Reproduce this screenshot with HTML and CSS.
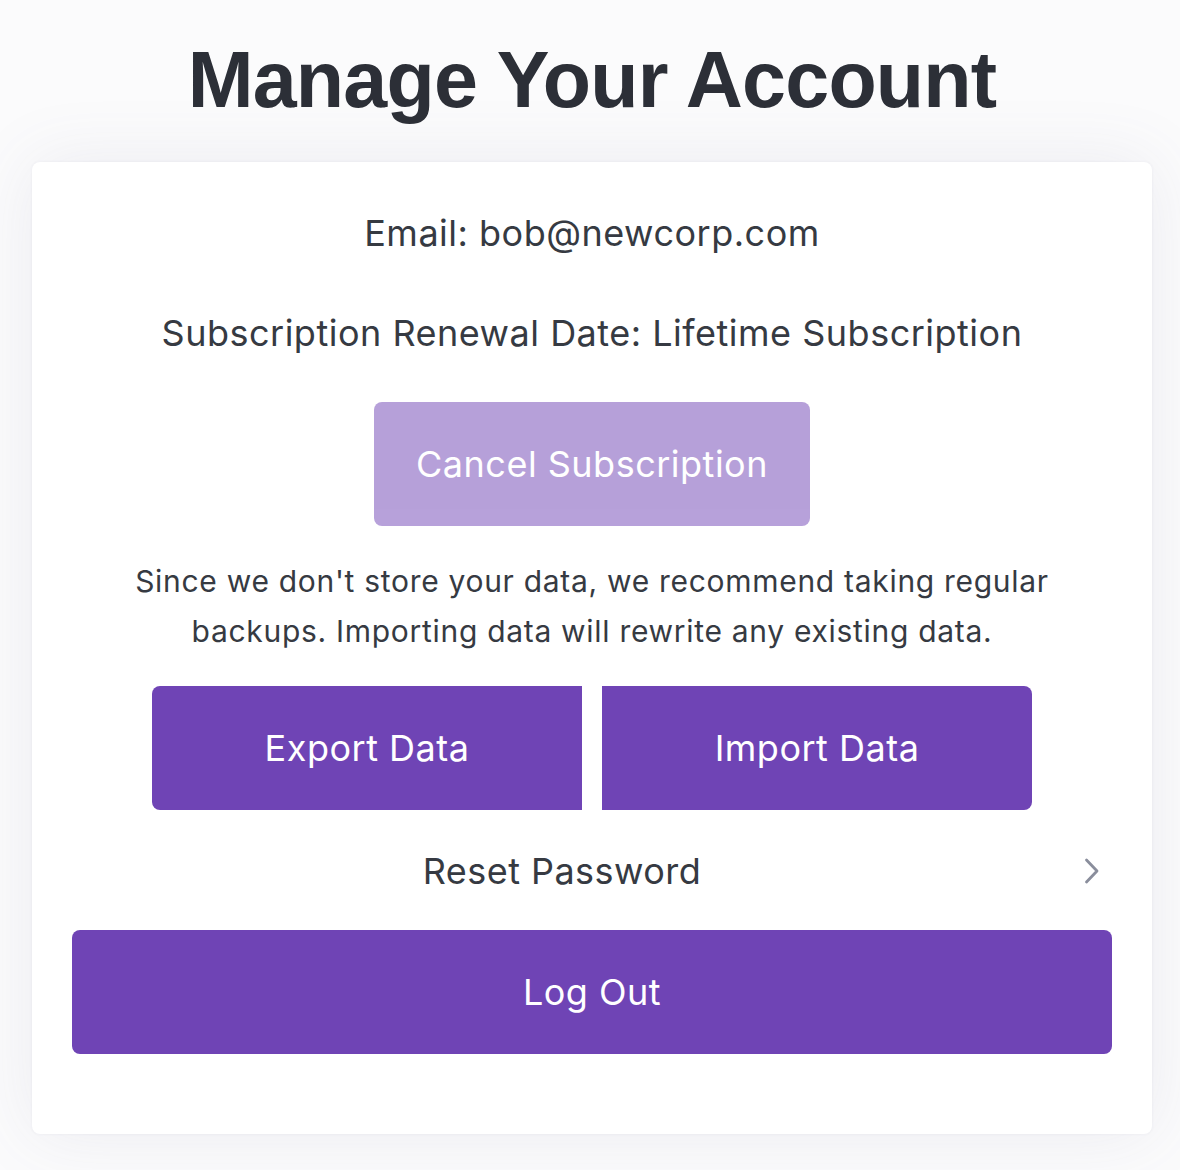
FILE: index.html
```html
<!DOCTYPE html>
<html lang="en">

<head>
    <meta charset="UTF-8">
    <meta name="viewport" content="width=device-width, initial-scale=1.0">
    <title>Manage Your Account</title>
    <link rel="stylesheet" href="styles.css">
</head>

<body>
    <div class="pagina">
        <h1 class="titulo">Manage Your Account</h1>

        <div class="tarjeta">
            <p class="dato">Email: bob@newcorp.com</p>
            <p class="dato renovacion">Subscription Renewal Date: Lifetime Subscription</p>

            <button class="boton boton-cancelar" disabled>Cancel Subscription</button>

            <p class="aviso">Since we don't store your data, we recommend taking regular backups. Importing data will rewrite any existing data.</p>

            <div class="grupo-datos">
                <button class="boton boton-exportar">Export Data</button>
                <button class="boton boton-importar">Import Data</button>
            </div>

            <div class="fila-reset">
                <span class="fila-texto">Reset Password</span>
                <span class="fila-flecha">
                    <svg width="16" height="28" viewBox="0 0 16 28" fill="none" stroke="#8a8e9c" stroke-width="2.8" stroke-linecap="round" stroke-linejoin="round">
                        <path d="M2.5 3 L13 14 L2.5 25" />
                    </svg>
                </span>
            </div>

            <button class="boton boton-salir">Log Out</button>
        </div>
    </div>
</body>

</html>
```

FILE: styles.css
```css
body {
    margin: 0;
    background-color: #fbfbfc;
    font-family: Inter, "Noto Sans", sans-serif;
    color: #363a42;
}

.pagina {
    width: 1120px;
    margin-left: 32px;
    padding-bottom: 36px;
}

.titulo {
    margin: 40px 0 43px;
    font-family: "Liberation Sans", Arial, sans-serif;
    font-size: 79px;
    font-weight: bold;
    line-height: 1;
    letter-spacing: -0.8px;
    text-align: center;
    color: #2c2f37;
}

.tarjeta {
    background-color: white;
    border-radius: 8px;
    box-shadow: 0 0 70px rgba(95, 95, 140, 0.10), 0 0 3px rgba(95, 95, 140, 0.08);
    padding: 49px 40px 80px;
    display: flex;
    flex-direction: column;
    align-items: center;
}

.dato {
    margin: 0;
    font-size: 36px;
    line-height: 44px;
    letter-spacing: 0.5px;
    text-align: center;
}

.renovacion {
    margin-top: 56px;
}

.boton {
    border: 0;
    border-radius: 8px;
    background-color: rgb(111, 68, 181);
    color: white;
    font-family: Inter, "Noto Sans", sans-serif;
    font-size: 36px;
    letter-spacing: 0.5px;
    height: 124px;
    cursor: pointer;
}

.boton-cancelar {
    margin-top: 47px;
    width: 436px;
    opacity: 0.5;
    cursor: default;
}

.aviso {
    margin: 30px 0 0;
    width: 980px;
    font-size: 30px;
    line-height: 50px;
    letter-spacing: 0.7px;
    text-align: center;
}

.grupo-datos {
    margin-top: 30px;
    display: flex;
    gap: 20px;
}

.boton-exportar,
.boton-importar {
    width: 430px;
}

.boton-exportar {
    border-radius: 8px 0 0 8px;
}

.boton-importar {
    border-radius: 0 8px 8px 0;
}

.fila-reset {
    margin-top: 31px;
    width: 100%;
    height: 60px;
    display: flex;
    align-items: center;
}

.fila-texto {
    flex: 1;
    text-align: center;
    font-size: 36px;
    letter-spacing: 0.45px;
}

.fila-flecha {
    width: 60px;
    display: flex;
    justify-content: flex-end;
    padding-right: 12px;
    box-sizing: border-box;
}

.boton-salir {
    margin-top: 29px;
    width: 100%;
}
```
